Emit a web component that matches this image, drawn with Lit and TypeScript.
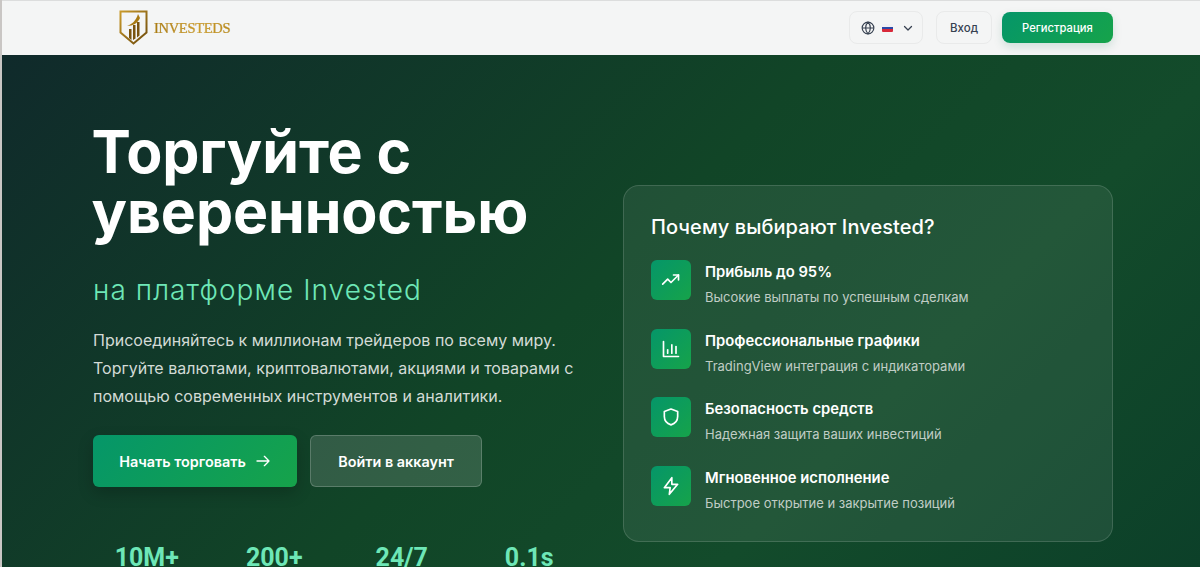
import { LitElement, css, html, svg } from "lit";
import { customElement } from "lit/decorators.js";

const features = [
  {
    title: "Прибыль до 95%",
    text: "Высокие выплаты по успешным сделкам",
    icon: svg`<path d="M2 17l6-6 4 4 9-9"/><path d="M15 6h6v6"/>`,
  },
  {
    title: "Профессиональные графики",
    text: "TradingView интеграция с индикаторами",
    icon: svg`<path d="M3 3v18h18"/><path d="M8 17v-4"/><path d="M13 17V7"/><path d="M18 17v-8"/>`,
  },
  {
    title: "Безопасность средств",
    text: "Надежная защита ваших инвестиций",
    icon: svg`<path d="M12 2.500l8 3v6c0 5-3.400 8.600-8 10-4.600-1.400-8-5-8-10v-6z"/>`,
  },
  {
    title: "Мгновенное исполнение",
    text: "Быстрое открытие и закрытие позиций",
    icon: svg`<path d="M13 2L4 14h7l-1 8 10-12h-7z"/>`,
  },
];

const stats = ["10M+", "200+", "24/7", "0.1s"];

@customElement("app-root")
export class AppRoot extends LitElement {
  static styles = css`
    :host {
      display: block;
      height: 567px;
      overflow: hidden;
      font-family: Inter, "Noto Sans", sans-serif;
      background: #c9c6c4;
      padding-left: 2px;
    }
    * {
      box-sizing: border-box;
    }
    .nav {
      height: 55px;
      display: flex;
      align-items: center;
      justify-content: space-between;
      padding: 0 87px 0 117px;
      background: #f4f5f5;
      border-top: 1px solid #dcdddd;
    }
    .logo {
      display: flex;
      align-items: center;
      gap: 5px;
    }
    .logo-name {
      font-family: "Liberation Serif", serif;
      font-size: 14.5px;
      letter-spacing: -0.3px;
      -webkit-text-stroke: 0.2px #b98c1e;
      background: linear-gradient(90deg, #a87a12, #d0a030 60%, #b98c1e);
      -webkit-background-clip: text;
      background-clip: text;
      color: transparent;
    }
    .nav-actions {
      display: flex;
      align-items: center;
      margin-top: -1px;
    }
    .lang {
      width: 74px;
      height: 33px;
      display: flex;
      align-items: center;
      gap: 7px;
      padding-left: 11px;
      border: 1px solid #e9eaea;
      border-radius: 8px;
      margin-right: 13px;
    }
    .flag {
      width: 11px;
      height: 8px;
      border-radius: 1px;
      background: linear-gradient(#f1f1f4 33%, #2b4aa8 33% 66%, #d8293a 66%);
    }
    .lang .chev {
      margin-left: 2px;
    }
    .login {
      width: 56px;
      height: 33px;
      display: flex;
      align-items: center;
      justify-content: center;
      border: 1px solid #e9eaea;
      border-radius: 8px;
      font-size: 11.5px;
      font-weight: 500;
      color: #374151;
      margin-right: 10px;
    }
    .signup {
      width: 111px;
      height: 31px;
      display: flex;
      align-items: center;
      justify-content: center;
      border-radius: 8px;
      font-size: 11.2px;
      font-weight: 500;
      color: #fff;
      background: linear-gradient(135deg, #059669, #16a34a);
      box-shadow: 0 4px 10px rgba(5, 100, 70, 0.15);
    }
    .hero {
      height: 512px;
      padding: 67px 87px 0 91px;
      display: grid;
      grid-template-columns: 490px 490px;
      column-gap: 40px;
      color: #fff;
      background: linear-gradient(135deg, #102a2b 0%, #114527 48%, #134b2b 72%, #0c4029 100%);
    }
    h1 {
      margin: 0 0 0 -1.5px;
      font-size: 59px;
      line-height: 60px;
      font-weight: 700;
      letter-spacing: -0.1px;
    }
    .sub {
      margin-top: 30px;
      font-size: 28px;
      line-height: 36px;
      font-weight: 300;
      letter-spacing: 1.05px;
      color: #6ee7b7;
    }
    .lead {
      margin: 18px 0 0;
      font-size: 16px;
      line-height: 28px;
      color: #d3dbd6;
    }
    .cta {
      display: flex;
      gap: 13px;
      margin-top: 25px;
    }
    .btn {
      height: 52px;
      display: flex;
      align-items: center;
      justify-content: center;
      gap: 9px;
      border-radius: 6px;
      font-size: 14.4px;
      font-weight: 600;
    }
    .primary {
      width: 204px;
      background: linear-gradient(135deg, #059669, #16a34a);
      box-shadow: 0 6px 16px rgba(0, 0, 0, 0.2);
    }
    .secondary {
      width: 172px;
      background: rgba(255, 255, 255, 0.14);
      border: 1px solid rgba(255, 255, 255, 0.2);
    }
    .stats {
      display: grid;
      grid-template-columns: repeat(4, 127.5px);
      margin: 57px 0 0 -10px;
      width: 510px;
      text-align: center;
      font-family: Roboto, sans-serif;
      font-size: 25px;
      line-height: 28px;
      font-weight: 700;
      color: #6ee7b7;
    }
    .card {
      align-self: start;
      height: 357px;
      margin-top: 63px;
      padding: 27px;
      border: 1px solid rgba(255, 255, 255, 0.14);
      border-radius: 16px;
      background: rgba(255, 255, 255, 0.07);
    }
    h2 {
      margin: 0 0 19px;
      font-size: 20px;
      line-height: 28px;
      font-weight: 500;
      letter-spacing: 0.08px;
    }
    .features {
      display: flex;
      flex-direction: column;
      gap: 28.6px;
    }
    .feature {
      display: flex;
      gap: 14px;
      height: 40px;
    }
    .badge {
      width: 40px;
      height: 40px;
      flex: none;
      display: flex;
      align-items: center;
      justify-content: center;
      border-radius: 6px;
      background: linear-gradient(135deg, #059669, #16a34a);
    }
    .badge svg {
      width: 20px;
      height: 20px;
      fill: none;
      stroke: #fff;
      stroke-width: 2;
      stroke-linecap: round;
      stroke-linejoin: round;
    }
    .feature h3 {
      margin: 2px 0 0;
      font-size: 14.8px;
      line-height: 20px;
      font-weight: 600;
    }
    .feature p {
      margin: 7px 0 0;
      font-size: 13px;
      line-height: 16px;
      color: #c0cdc5;
    }
  `;

  render() {
    return html`
      <header class="nav">
        <div class="logo">
          <svg width="30" height="36" viewBox="0 0 30 36">
            <defs>
              <linearGradient id="gold" x1="0" y1="0" x2="1" y2="1">
                <stop offset="0" stop-color="#c99a2a" />
                <stop offset="1" stop-color="#6d4a0c" />
              </linearGradient>
            </defs>
            <path d="M1.500 1.500h26v21L14.500 33.500 1.500 22.500z" fill="none" stroke="url(#gold)" stroke-width="2" />
            <path d="M10 28v-9h2.500v11zM14 30V15h2.500v13.500zM18 27.500V12h2.500v13.500z" fill="#7a540f" />
            <path d="M8 16c5-2 9-5 11-12l2 4c-2 5-7 8-13 8z" fill="#a87a12" />
          </svg>
          <span class="logo-name">INVESTEDS</span>
        </div>
        <div class="nav-actions">
          <div class="lang">
            <svg width="14" height="14" viewBox="0 0 24 24" fill="none" stroke="#374151" stroke-width="2">
              <circle cx="12" cy="12" r="10" />
              <path d="M2 12h20M12 2c3 3 4 6.500 4 10s-1 7-4 10c-3-3-4-6.500-4-10s1-7 4-10z" />
            </svg>
            <span class="flag"></span>
            <svg class="chev" width="12" height="12" viewBox="0 0 24 24" fill="none" stroke="#374151" stroke-width="2.500" stroke-linecap="round" stroke-linejoin="round">
              <path d="M5 9l7 7 7-7" />
            </svg>
          </div>
          <div class="login">Вход</div>
          <div class="signup">Регистрация</div>
        </div>
      </header>
      <section class="hero">
        <div>
          <h1>Торгуйте с уверенностью</h1>
          <div class="sub">на платформе Invested</div>
          <p class="lead">
            Присоединяйтесь к миллионам трейдеров по всему миру. Торгуйте
            валютами, криптовалютами, акциями и товарами с помощью современных
            инструментов и аналитики.
          </p>
          <div class="cta">
            <div class="btn primary">
              Начать торговать
              <svg width="16" height="16" viewBox="0 0 24 24" fill="none" stroke="#fff" stroke-width="2" stroke-linecap="round" stroke-linejoin="round">
                <path d="M3 12h18M14 5l7 7-7 7" />
              </svg>
            </div>
            <div class="btn secondary">Войти в аккаунт</div>
          </div>
          <div class="stats">${stats.map((s) => html`<span>${s}</span>`)}</div>
        </div>
        <aside class="card">
          <h2>Почему выбирают Invested?</h2>
          <div class="features">
            ${features.map(
              (f) => html`
                <div class="feature">
                  <div class="badge"><svg viewBox="0 0 24 24">${f.icon}</svg></div>
                  <div>
                    <h3>${f.title}</h3>
                    <p>${f.text}</p>
                  </div>
                </div>
              `
            )}
          </div>
        </aside>
      </section>
    `;
  }
}
